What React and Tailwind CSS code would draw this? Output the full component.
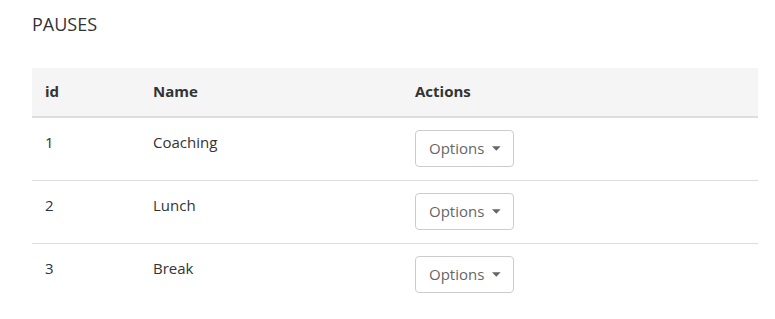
import React from "react";

const rows = [
  { id: 1, name: "Coaching" },
  { id: 2, name: "Lunch" },
  { id: 3, name: "Break" },
];

function OptionsButton() {
  return (
    <button className="flex items-center h-[37px] w-[99px] pl-[13px] pr-[12px] border border-[#cccccc] rounded-[4px] bg-white text-[15px] text-[#666666]">
      <span>Options</span>
      <svg className="ml-[8px]" width="10" height="5" viewBox="0 0 10 5">
        <path d="M0 0 L10 0 L5 5 Z" fill="#666666" />
      </svg>
    </button>
  );
}

export default function App() {
  return (
    <div className="bg-white w-[775px] h-[319px] pl-[32px] pr-[17px] pt-[10px] text-[#333333]" style={{ fontFamily: '"Open Sans", sans-serif' }}>
      <h1 className="text-[18px] leading-[28px] m-0">PAUSES</h1>
      <div className="mt-[30px]">
        <div className="grid grid-cols-[108px_262px_1fr] h-[50px] bg-[#f5f5f5] border-b-2 border-[#dddddd] items-center font-bold text-[15px] pb-[1px]">
          <div className="pl-[13px]">id</div>
          <div className="pl-[13px]">Name</div>
          <div className="pl-[13px]">Actions</div>
        </div>
        {rows.map((r, i) => (
          <div
            key={r.id}
            className={`grid grid-cols-[108px_262px_1fr] h-[63px] text-[15px] ${i < rows.length - 1 ? "border-b border-[#dddddd]" : ""}`}
          >
            <div className="pl-[13px] pt-[12px] leading-[24px]">{r.id}</div>
            <div className="pl-[13px] pt-[12px] leading-[24px]">{r.name}</div>
            <div className="pl-[13px] pt-[12px]">
              <OptionsButton />
            </div>
          </div>
        ))}
      </div>
    </div>
  );
}
